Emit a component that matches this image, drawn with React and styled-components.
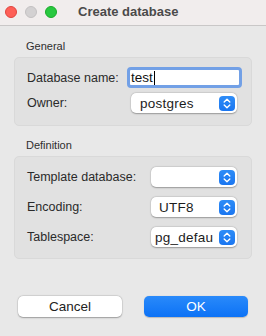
import React from "react";
import styled, { createGlobalStyle } from "styled-components";

const Global = createGlobalStyle`
  html, body { margin: 0; padding: 0; }
  body { width: 266px; height: 336px; overflow: hidden; background: #e8e8e8; }
  * { box-sizing: border-box; }
`;

const Window = styled.div`
  width: 266px;
  height: 336px;
  background: #e8e8e8;
  font-family: "Liberation Sans", Arial, sans-serif;
  color: #262626;
  display: flex;
  flex-direction: column;
`;

const TitleBar = styled.div`
  height: 26px;
  background: #f1eded;
  border-bottom: 1px solid #c9c7c7;
  display: flex;
  align-items: center;
  padding-left: 5px;
  flex-shrink: 0;
`;

const Lights = styled.div`
  display: flex;
  gap: 8px;
  margin-top: -1px;
`;

const Light = styled.span`
  width: 12px;
  height: 12px;
  border-radius: 50%;
  background: ${(p) => p.$c};
  border: 0.5px solid ${(p) => p.$b};
`;

const Title = styled.div`
  margin-left: 21px;
  font-weight: bold;
  font-size: 13px;
  color: #4a4a4a;
  margin-top: -2px;
`;

const Body = styled.div`
  flex: 1;
  display: flex;
  flex-direction: column;
  padding: 13px 14px 19px 14px;
`;

const SectionLabel = styled.div`
  font-size: 11px;
  line-height: 14px;
  padding-left: 12px;
  color: #2e2e2e;
  margin-bottom: ${(p) => p.$mb}px;
  margin-top: ${(p) => p.$mt || 0}px;
`;

const Group = styled.div`
  background: #e1e1e1;
  border: 1px solid #d9d9d9;
  border-radius: 5px;
  padding: ${(p) => p.$pt}px 14px ${(p) => p.$pb}px 12px;
  display: grid;
  grid-template-columns: ${(p) => p.$col}px 1fr;
  row-gap: ${(p) => p.$gap}px;
  align-items: center;
`;

const Label = styled.div`
  font-size: 12.5px;
  color: #2a2a2a;
  line-height: 20px;
`;

const TextField = styled.div`
  height: 21px;
  border: 3px solid #72a0e6;
  border-radius: 4px;
  background: #fff;
  display: flex;
  align-items: center;
  padding-left: 1px;
  font-size: 13.5px;
  color: #111;
  margin-left: -1px;
  margin-right: -5px;
`;

const Caret = styled.span`
  display: inline-block;
  width: 1px;
  height: 14px;
  background: #000;
  margin-left: 1px;
`;

const Popup = styled.div`
  height: 20px;
  background: #fff;
  border-radius: 5px;
  box-shadow: 0 0.5px 1.5px rgba(0, 0, 0, 0.3), 0 0 0 0.5px rgba(0, 0, 0, 0.06);
  display: flex;
  align-items: center;
  padding: 0 2px 0 ${(p) => p.$pl}px;
  margin-left: ${(p) => p.$ml || 0}px;
  font-size: 13.5px;
  letter-spacing: 0.25px;
  color: #1c1c1c;
  overflow: hidden;
`;

const PopupText = styled.span`
  white-space: nowrap;
  overflow: hidden;
  flex: 1;
  margin-right: 6px;
`;

const Stepper = styled.span`
  width: 16px;
  height: 15px;
  border-radius: 4px;
  background: linear-gradient(#2e8cf7, #1a76f0);
  display: flex;
  align-items: center;
  justify-content: center;
  flex-shrink: 0;
`;

const Spacer = styled.div`
  flex: 1;
`;

const Buttons = styled.div`
  display: flex;
  justify-content: space-between;
  padding: 0 4px;
`;

const Button = styled.div`
  width: 104px;
  height: 21px;
  border-radius: 5px;
  display: flex;
  align-items: center;
  justify-content: center;
  font-size: 13.5px;
  background: ${(p) => (p.$primary ? "linear-gradient(#2a8afa, #0c72f6)" : "#fff")};
  color: ${(p) => (p.$primary ? "#fff" : "#222")};
  box-shadow: ${(p) =>
    p.$primary
      ? "0 0.5px 1px rgba(0,0,0,0.2)"
      : "0 0.5px 1.5px rgba(0,0,0,0.3), 0 0 0 0.5px rgba(0,0,0,0.08)"};
`;

const StepIcon = () => (
  <Stepper>
    <svg width="8" height="11" viewBox="0 0 8 11" fill="none">
      <path d="M1.2 4 L4 1.3 L6.8 4" stroke="#fff" strokeWidth="1.4" strokeLinecap="round" strokeLinejoin="round" />
      <path d="M1.2 7 L4 9.7 L6.8 7" stroke="#fff" strokeWidth="1.4" strokeLinecap="round" strokeLinejoin="round" />
    </svg>
  </Stepper>
);

export default function App() {
  return (
    <Window>
      <Global />
      <TitleBar>
        <Lights>
          <Light $c="#fe5f57" $b="#e0443e" />
          <Light $c="#d3d1d2" $b="#c3c1c2" />
          <Light $c="#28c840" $b="#1aab29" />
        </Lights>
        <Title>Create database</Title>
      </TitleBar>
      <Body>
        <SectionLabel $mb={4}>General</SectionLabel>
        <Group $pt={9} $pb={12} $col={101} $gap={5}>
          <Label>Database name:</Label>
          <TextField>
            test
            <Caret />
          </TextField>
          <Label>Owner:</Label>
          <Popup $pl={9} $ml={3}>
            <PopupText>postgres</PopupText>
            <StepIcon />
          </Popup>
        </Group>
        <SectionLabel $mt={12} $mb={4}>Definition</SectionLabel>
        <Group $pt={10} $pb={11} $col={124} $gap={10}>
          <Label>Template database:</Label>
          <Popup $pl={9}>
            <PopupText></PopupText>
            <StepIcon />
          </Popup>
          <Label>Encoding:</Label>
          <Popup $pl={8}>
            <PopupText>UTF8</PopupText>
            <StepIcon />
          </Popup>
          <Label>Tablespace:</Label>
          <Popup $pl={4}>
            <PopupText>pg_default</PopupText>
            <StepIcon />
          </Popup>
        </Group>
        <Spacer />
        <Buttons>
          <Button>Cancel</Button>
          <Button $primary>OK</Button>
        </Buttons>
      </Body>
    </Window>
  );
}
